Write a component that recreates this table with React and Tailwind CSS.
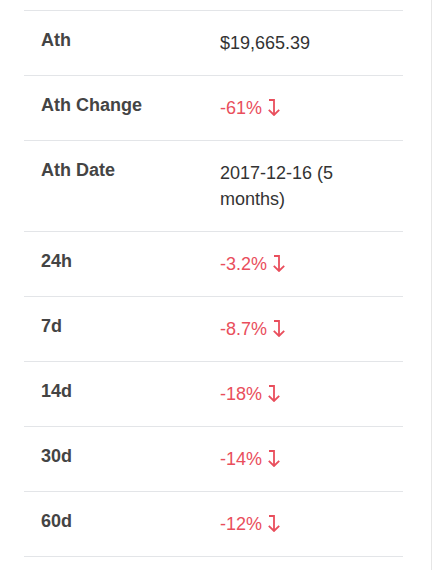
import React from "react";

const rows = [
  { label: "Ath", value: "$19,665.39" },
  { label: "Ath Change", value: "-61%", down: true },
  { label: "Ath Date", value: "2017-12-16 (5 months)" },
  { label: "24h", value: "-3.2%", down: true },
  { label: "7d", value: "-8.7%", down: true },
  { label: "14d", value: "-18%", down: true },
  { label: "30d", value: "-14%", down: true },
  { label: "60d", value: "-12%", down: true },
];

function LevelDown() {
  return (
    <svg width="12" height="17" viewBox="0 0 12 17" className="inline-block ml-[6px] align-[-2px]" fill="none">
      <path d="M1 1H6V15.5" stroke="#e94e5c" strokeWidth="1.8" />
      <path d="M0.8 10.8L6 16L11.2 10.8" stroke="#e94e5c" strokeWidth="1.8" />
    </svg>
  );
}

export default function App() {
  return (
    <div className="w-[435px] h-[570px] bg-white overflow-hidden" style={{ fontFamily: '"Liberation Sans", Arial, sans-serif' }}>
      <div className="w-[432px] h-full border-r border-[#e6e6e6] pt-[10px]">
        <div className="ml-[24px] w-[379px] border-t border-[#e3e5e8]">
          {rows.map((r) => (
            <div key={r.label} className="grid grid-cols-[180px_1fr] border-b border-[#e3e5e8]">
              <div className="pl-[17px] pt-[16px] text-[18px] leading-[26px] font-bold text-[#444]">{r.label}</div>
              <div className={`pl-[16px] pr-[16px] py-[19px] text-[18px] leading-[26px] ${r.down ? "text-[#e94e5c]" : "text-[#333]"}`}>
                {r.value}
                {r.down && <LevelDown />}
              </div>
            </div>
          ))}
        </div>
      </div>
    </div>
  );
}
